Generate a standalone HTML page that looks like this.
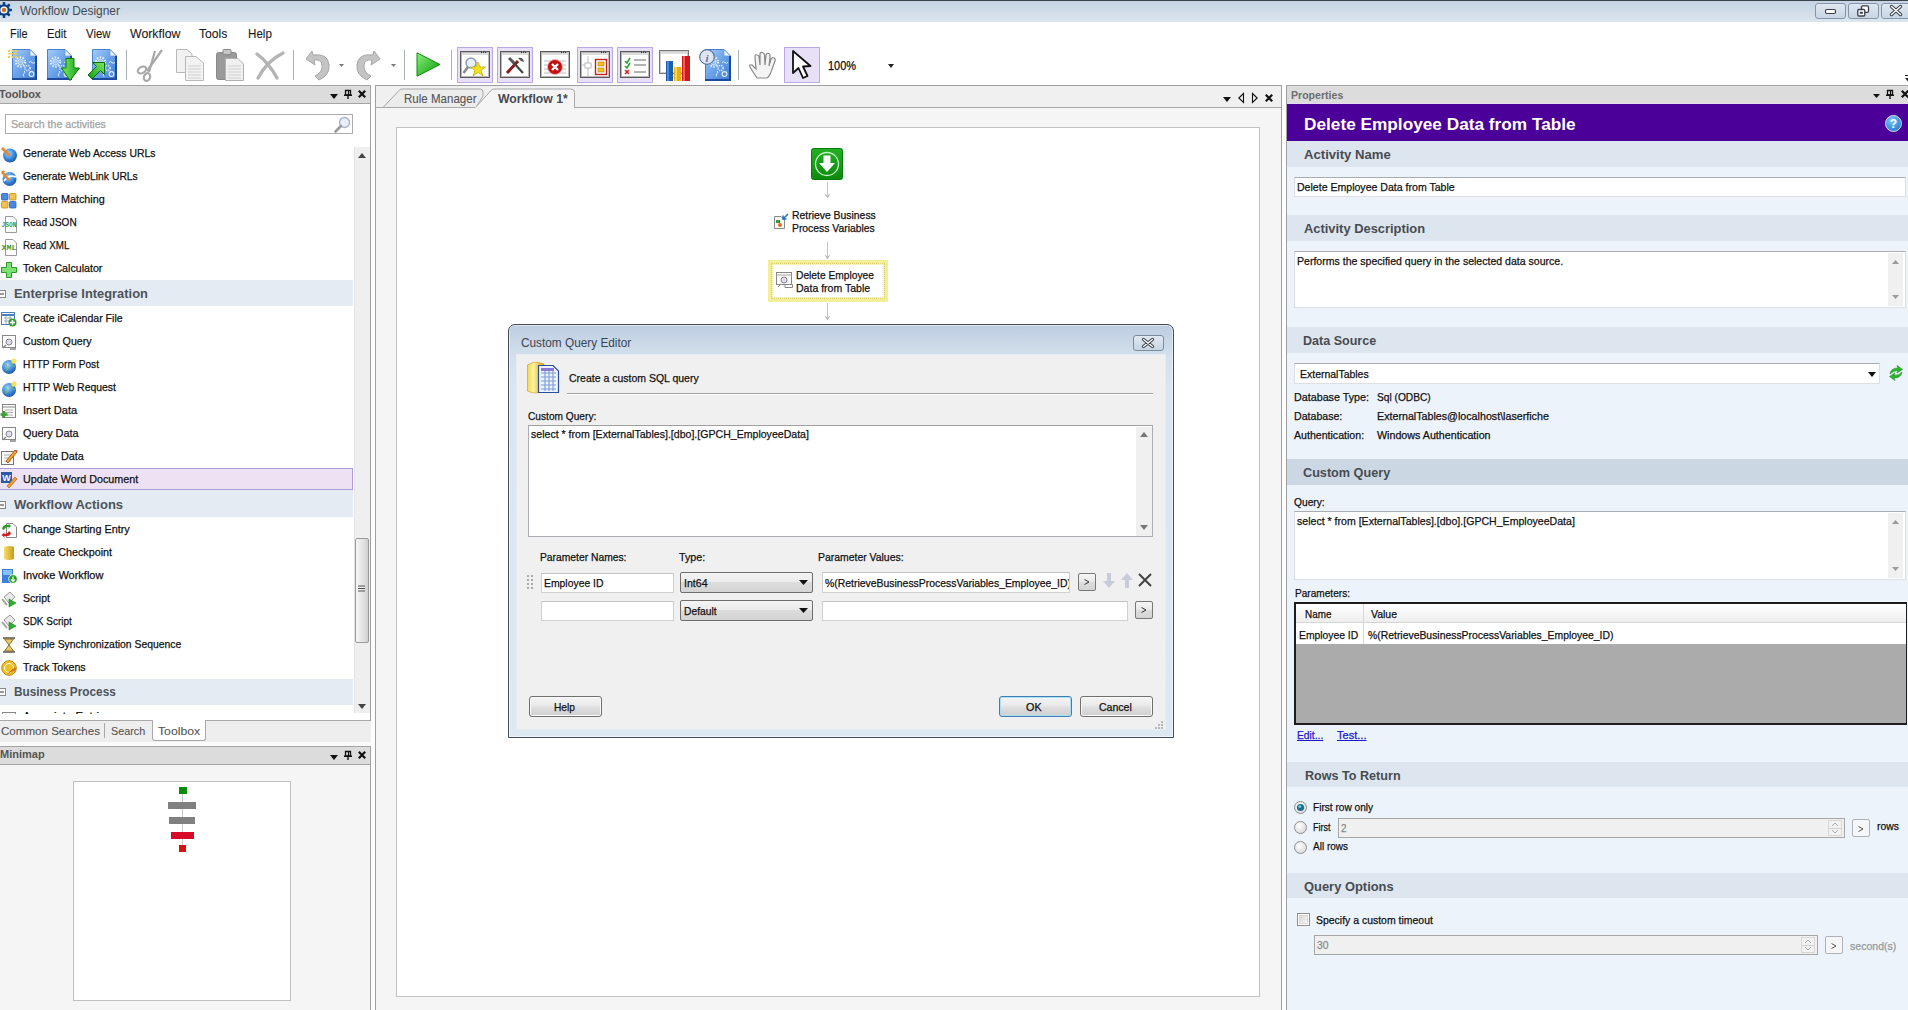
<!DOCTYPE html><html><head><meta charset="utf-8"><title>Workflow Designer</title><style>
html,body{margin:0;padding:0}
body{width:1908px;height:1010px;overflow:hidden;position:relative;background:#f5f5f5;font-family:"Liberation Sans",sans-serif}
.a{position:absolute;box-sizing:border-box}
.t{position:absolute;white-space:nowrap;-webkit-text-stroke:0.25px currentColor}
svg.a{overflow:visible}
</style></head><body>

<div class="a" style="left:0px;top:0px;width:1908px;height:22px;background:linear-gradient(#c6d4e4,#cfdbe8 45%,#dce5ef);border-top:1px solid #3a424c"></div>
<svg class="a" style="left:-4px;top:1px" width="17" height="18" viewBox="0 0 17 18"><g transform="translate(8,9)"><g fill="#0f4284"><rect x="-1.3" y="-8" width="2.6" height="4" rx="0.6" transform="rotate(0)"/><rect x="-1.3" y="-8" width="2.6" height="4" rx="0.6" transform="rotate(45)"/><rect x="-1.3" y="-8" width="2.6" height="4" rx="0.6" transform="rotate(90)"/><rect x="-1.3" y="-8" width="2.6" height="4" rx="0.6" transform="rotate(135)"/><rect x="-1.3" y="-8" width="2.6" height="4" rx="0.6" transform="rotate(180)"/><rect x="-1.3" y="-8" width="2.6" height="4" rx="0.6" transform="rotate(225)"/><rect x="-1.3" y="-8" width="2.6" height="4" rx="0.6" transform="rotate(270)"/><rect x="-1.3" y="-8" width="2.6" height="4" rx="0.6" transform="rotate(315)"/></g><circle r="5.8" fill="#0f4284"/><circle r="3.6" fill="#fff"/><circle r="2.2" fill="#d86a1a"/></g></svg>
<div class="t" style="left:20px;top:5.09px;font-size:12.3px;line-height:12.3px;color:#454a52;font-weight:normal;transform:scaleX(0.971);transform-origin:0 0;-webkit-text-stroke:0;">Workflow Designer</div>
<div class="a" style="left:1815px;top:3px;width:31px;height:16px;border:1px solid #8795a6;border-radius:3px;background:linear-gradient(#dfe8f2,#c7d5e4)"></div>
<div class="a" style="left:1848px;top:3px;width:31px;height:16px;border:1px solid #8795a6;border-radius:3px;background:linear-gradient(#dfe8f2,#c7d5e4)"></div>
<div class="a" style="left:1881px;top:3px;width:30px;height:16px;border:1px solid #8795a6;border-radius:3px;background:linear-gradient(#dfe8f2,#c7d5e4)"></div>
<svg class="a" style="left:1825px;top:9px" width="12" height="6" viewBox="0 0 12 6"><rect x="0.5" y="0.5" width="10" height="4" rx="1.5" fill="#fff" stroke="#3a3f46" stroke-width="1.2"/></svg>
<svg class="a" style="left:1857px;top:5px" width="13" height="12" viewBox="0 0 13 12"><rect x="4.5" y="0.8" width="7" height="6.5" rx="1" fill="#fff" stroke="#3a3f46" stroke-width="1.3"/><rect x="0.8" y="4.5" width="7" height="6.5" rx="1" fill="#fff" stroke="#3a3f46" stroke-width="1.3"/><rect x="2.8" y="6.8" width="3" height="2" fill="#3a3f46"/></svg>
<svg class="a" style="left:1890px;top:5px" width="12" height="11" viewBox="0 0 12 11"><path d="M1.5 1.5 L10.5 9.5 M10.5 1.5 L1.5 9.5" stroke="#3a3f46" stroke-width="3.4" stroke-linecap="round"/><path d="M1.5 1.5 L10.5 9.5 M10.5 1.5 L1.5 9.5" stroke="#fff" stroke-width="1.5" stroke-linecap="round"/></svg>
<div class="a" style="left:0px;top:22px;width:1908px;height:63px;background:#fff"></div>
<div class="t" style="left:9.5px;top:28.09px;font-size:12.3px;line-height:12.3px;color:#1a1a1a;font-weight:normal;transform:scaleX(0.888);transform-origin:0 0;-webkit-text-stroke:0.1px currentColor;">File</div>
<div class="t" style="left:46.5px;top:28.09px;font-size:12.3px;line-height:12.3px;color:#1a1a1a;font-weight:normal;transform:scaleX(0.92);transform-origin:0 0;-webkit-text-stroke:0.1px currentColor;">Edit</div>
<div class="t" style="left:85.5px;top:28.09px;font-size:12.3px;line-height:12.3px;color:#1a1a1a;font-weight:normal;transform:scaleX(0.9267);transform-origin:0 0;-webkit-text-stroke:0.1px currentColor;">View</div>
<div class="t" style="left:129.6px;top:28.09px;font-size:12.3px;line-height:12.3px;color:#1a1a1a;font-weight:normal;transform:scaleX(1.001);transform-origin:0 0;-webkit-text-stroke:0.1px currentColor;">Workflow</div>
<div class="t" style="left:199.4px;top:28.09px;font-size:12.3px;line-height:12.3px;color:#1a1a1a;font-weight:normal;transform:scaleX(0.9856);transform-origin:0 0;-webkit-text-stroke:0.1px currentColor;">Tools</div>
<div class="t" style="left:247.8px;top:28.09px;font-size:12.3px;line-height:12.3px;color:#1a1a1a;font-weight:normal;transform:scaleX(0.9448);transform-origin:0 0;-webkit-text-stroke:0.1px currentColor;">Help</div>
<div class="a" style="left:0px;top:85px;width:1908px;height:1px;background:#a7a7a7"></div>
<svg class="a" style="left:12px;top:49px" width="25" height="31" viewBox="0 0 25 31"><defs><linearGradient id="dg12" x1="0" y1="0" x2="1" y2="1"><stop offset="0" stop-color="#a4ccf8"/><stop offset="0.5" stop-color="#6aa2ea"/><stop offset="1" stop-color="#3a78d6"/></linearGradient></defs><path d="M0.5 0.5 H18 L24.5 7 V30.5 H0.5 Z" fill="url(#dg12)" stroke="#4a80d0" stroke-width="1"/><path d="M18 0.5 V7 H24.5 Z" fill="#eef5ff" stroke="#6a98d8" stroke-width="0.8"/><rect x="23" y="7" width="2" height="24" fill="#1e4a9e"/><rect x="0" y="29" width="25" height="2" fill="#1e4a9e"/><g fill="none" stroke="#e6f0ff"><circle cx="8.5" cy="13" r="4.6" stroke-width="2.2" stroke-dasharray="1.5 1.4"/><circle cx="8.5" cy="13" r="2.6" stroke-width="0.9"/><circle cx="8.5" cy="13" r="0.9" stroke-width="0.8"/><circle cx="15.5" cy="19" r="2.6" stroke-width="1.6" stroke-dasharray="1.1 1"/><path d="M17 13.5 q1.5 -1.5 3 0 q1.5 1.5 3 0" stroke-width="1"/><path d="M12 22 q2 1 0 2.5 q-2 1.5 0 3" stroke-width="1"/><circle cx="19.5" cy="25" r="2.4" stroke-width="1.1"/></g></svg>
<svg class="a" style="left:8px;top:50px" width="9" height="8" viewBox="0 0 9 8"><g fill="#f4d040"><rect x="0" y="0" width="2" height="2"/><rect x="3.5" y="0" width="2" height="2"/><rect x="7" y="0" width="2" height="2"/><rect x="0" y="3" width="9" height="1.6" opacity="0.8"/><rect x="0" y="6" width="2" height="2"/><rect x="3.5" y="6" width="2" height="2"/><rect x="7" y="6" width="2" height="2"/></g></svg>
<svg class="a" style="left:47px;top:49px" width="25" height="31" viewBox="0 0 25 31"><defs><linearGradient id="dg47" x1="0" y1="0" x2="1" y2="1"><stop offset="0" stop-color="#a4ccf8"/><stop offset="0.5" stop-color="#6aa2ea"/><stop offset="1" stop-color="#3a78d6"/></linearGradient></defs><path d="M0.5 0.5 H18 L24.5 7 V30.5 H0.5 Z" fill="url(#dg47)" stroke="#4a80d0" stroke-width="1"/><path d="M18 0.5 V7 H24.5 Z" fill="#eef5ff" stroke="#6a98d8" stroke-width="0.8"/><rect x="23" y="7" width="2" height="24" fill="#1e4a9e"/><rect x="0" y="29" width="25" height="2" fill="#1e4a9e"/><g fill="none" stroke="#e6f0ff"><circle cx="8.5" cy="13" r="4.6" stroke-width="2.2" stroke-dasharray="1.5 1.4"/><circle cx="8.5" cy="13" r="2.6" stroke-width="0.9"/><circle cx="8.5" cy="13" r="0.9" stroke-width="0.8"/><circle cx="15.5" cy="19" r="2.6" stroke-width="1.6" stroke-dasharray="1.1 1"/><path d="M17 13.5 q1.5 -1.5 3 0 q1.5 1.5 3 0" stroke-width="1"/><path d="M12 22 q2 1 0 2.5 q-2 1.5 0 3" stroke-width="1"/><circle cx="19.5" cy="25" r="2.4" stroke-width="1.1"/></g></svg>
<svg class="a" style="left:61px;top:58px" width="19" height="23" viewBox="0 0 19 23"><defs><linearGradient id="ga" x1="0" x2="1"><stop offset="0" stop-color="#7ee86a"/><stop offset="1" stop-color="#12a812"/></linearGradient></defs><path d="M5 0.5 H13 V10 H18.5 L9 22.5 L0.5 10 H5 Z" fill="url(#ga)" stroke="#0a7a0a" stroke-width="1"/></svg>
<svg class="a" style="left:92px;top:49px" width="25" height="31" viewBox="0 0 25 31"><defs><linearGradient id="dg92" x1="0" y1="0" x2="1" y2="1"><stop offset="0" stop-color="#a4ccf8"/><stop offset="0.5" stop-color="#6aa2ea"/><stop offset="1" stop-color="#3a78d6"/></linearGradient></defs><path d="M0.5 0.5 H18 L24.5 7 V30.5 H0.5 Z" fill="url(#dg92)" stroke="#4a80d0" stroke-width="1"/><path d="M18 0.5 V7 H24.5 Z" fill="#eef5ff" stroke="#6a98d8" stroke-width="0.8"/><rect x="23" y="7" width="2" height="24" fill="#1e4a9e"/><rect x="0" y="29" width="25" height="2" fill="#1e4a9e"/><g fill="none" stroke="#e6f0ff"><circle cx="8.5" cy="13" r="4.6" stroke-width="2.2" stroke-dasharray="1.5 1.4"/><circle cx="8.5" cy="13" r="2.6" stroke-width="0.9"/><circle cx="8.5" cy="13" r="0.9" stroke-width="0.8"/><circle cx="15.5" cy="19" r="2.6" stroke-width="1.6" stroke-dasharray="1.1 1"/><path d="M17 13.5 q1.5 -1.5 3 0 q1.5 1.5 3 0" stroke-width="1"/><path d="M12 22 q2 1 0 2.5 q-2 1.5 0 3" stroke-width="1"/><circle cx="19.5" cy="25" r="2.4" stroke-width="1.1"/></g></svg>
<svg class="a" style="left:87px;top:61px" width="19" height="19" viewBox="0 0 19 19"><defs><linearGradient id="gb" x1="0" y1="1" x2="1" y2="0"><stop offset="0" stop-color="#0f9a0f"/><stop offset="1" stop-color="#7ee86a"/></linearGradient></defs><path d="M17.5 1.5 V13.5 L13.5 9.5 L5 18 L1 14 L9.5 5.5 L5.5 1.5 Z" fill="url(#gb)" stroke="#0a6e0a" stroke-width="1"/></svg>
<div class="a" style="left:126px;top:50px;width:1px;height:30px;background:#a9b1ba"></div>
<svg class="a" style="left:136px;top:49px" width="28" height="32" viewBox="0 0 28 32"><g fill="none" stroke="#a8a8a8" stroke-width="2.2"><path d="M26 1 L11 22"/><path d="M19 2 L13 23" /><ellipse cx="6" cy="21" rx="4.5" ry="3" transform="rotate(-30 6 21)"/><ellipse cx="11" cy="28" rx="3" ry="4" transform="rotate(20 11 28)"/></g></svg>
<svg class="a" style="left:176px;top:49px" width="29" height="32" viewBox="0 0 29 32"><g stroke="#b8b8b8" stroke-width="1" fill="#f2f2f2"><path d="M0.5 0.5 H11 L16 5 V23.5 H0.5 Z"/><path d="M9.5 7.5 H20 L27.5 14 V31.5 H9.5 Z"/></g><g stroke="#d0d0d0"><path d="M12 17H25M12 20H25M12 23H25M12 26H25M12 29H25"/></g></svg>
<svg class="a" style="left:216px;top:49px" width="29" height="32" viewBox="0 0 29 32"><rect x="0.5" y="3.5" width="20" height="27" rx="2" fill="#9a9a9a" stroke="#888"/><rect x="7" y="0.5" width="8" height="5" rx="1" fill="#c8c8c8" stroke="#888"/><path d="M9.5 9.5 H22 L27.5 15 V31.5 H9.5 Z" fill="#f0f0f0" stroke="#b0b0b0"/><g stroke="#d0d0d0"><path d="M12 17H25M12 20H25M12 23H25M12 26H25M12 29H25"/></g></svg>
<svg class="a" style="left:255px;top:51px" width="30" height="29" viewBox="0 0 30 29"><g fill="none" stroke="#b4b4b4" stroke-width="3.4" stroke-linecap="round"><path d="M2 3 Q14 12 22 27"/><path d="M28 2 Q12 10 3 27"/></g></svg>
<div class="a" style="left:293px;top:50px;width:1px;height:30px;background:#a9b1ba"></div>
<svg class="a" style="left:304px;top:49px" width="27" height="32" viewBox="0 0 27 32"><path d="M2 10 L8 2 L9 6 Q24 4 25 16 Q26 26 15 31 L11 27 Q19 23 18 16 Q17 10 10 11 L11 16 Z" fill="#c4c4c4" stroke="#a6a6a6" stroke-width="1"/></svg>
<svg class="a" style="left:339px;top:64px" width="5" height="3" viewBox="0 0 5 3"><path d="M0 0H5L2.5 3Z" fill="#7a7a7a"/></svg>
<svg class="a" style="left:355px;top:49px" width="27" height="32" viewBox="0 0 27 32"><g transform="translate(27,0) scale(-1,1)"><path d="M2 10 L8 2 L9 6 Q24 4 25 16 Q26 26 15 31 L11 27 Q19 23 18 16 Q17 10 10 11 L11 16 Z" fill="#c4c4c4" stroke="#a6a6a6" stroke-width="1"/></g></svg>
<svg class="a" style="left:391px;top:64px" width="5" height="3" viewBox="0 0 5 3"><path d="M0 0H5L2.5 3Z" fill="#7a7a7a"/></svg>
<div class="a" style="left:404px;top:50px;width:1px;height:30px;background:#a9b1ba"></div>
<svg class="a" style="left:416px;top:52px" width="25" height="25" viewBox="0 0 25 25"><defs><linearGradient id="gp" x1="0" y1="0" x2="1" y2="1"><stop offset="0" stop-color="#8af07a"/><stop offset="1" stop-color="#0a9a0a"/></linearGradient></defs><path d="M1 0.8 L24 12.5 L1 24.2 Z" fill="url(#gp)" stroke="#0d8a0d" stroke-width="1"/></svg>
<div class="a" style="left:451px;top:50px;width:1px;height:30px;background:#a9b1ba"></div>
<div class="a" style="left:457px;top:47px;width:36px;height:36px;background:#e8e0f6;border:1px solid #b9a8e4"></div>
<div class="a" style="left:497px;top:47px;width:36px;height:36px;background:#e8e0f6;border:1px solid #b9a8e4"></div>
<div class="a" style="left:577px;top:47px;width:36px;height:36px;background:#e8e0f6;border:1px solid #b9a8e4"></div>
<div class="a" style="left:617px;top:47px;width:36px;height:36px;background:#e8e0f6;border:1px solid #b9a8e4"></div>
<div class="a" style="left:784px;top:47px;width:36px;height:36px;background:#e8e0f6;border:1px solid #b9a8e4"></div>
<div class="a" style="left:460px;top:51px;width:30px;height:27px;background:linear-gradient(#dcdcdc 0 3px,#fff 3px);border:1px solid #5a5a5a;box-shadow:inset 0 0 0 1px #b8b8b8"></div>
<svg class="a" style="left:481px;top:52px" width="6" height="2" viewBox="0 0 6 2"><rect x="0" y="0" width="1" height="1" fill="#333"/><rect x="2" y="0" width="1" height="1" fill="#333"/><rect x="4" y="0" width="1" height="1" fill="#333"/></svg>
<div class="a" style="left:500px;top:51px;width:30px;height:27px;background:linear-gradient(#dcdcdc 0 3px,#fff 3px);border:1px solid #5a5a5a;box-shadow:inset 0 0 0 1px #b8b8b8"></div>
<svg class="a" style="left:521px;top:52px" width="6" height="2" viewBox="0 0 6 2"><rect x="0" y="0" width="1" height="1" fill="#333"/><rect x="2" y="0" width="1" height="1" fill="#333"/><rect x="4" y="0" width="1" height="1" fill="#333"/></svg>
<div class="a" style="left:540px;top:51px;width:30px;height:27px;background:linear-gradient(#dcdcdc 0 3px,#fff 3px);border:1px solid #5a5a5a;box-shadow:inset 0 0 0 1px #b8b8b8"></div>
<svg class="a" style="left:561px;top:52px" width="6" height="2" viewBox="0 0 6 2"><rect x="0" y="0" width="1" height="1" fill="#333"/><rect x="2" y="0" width="1" height="1" fill="#333"/><rect x="4" y="0" width="1" height="1" fill="#333"/></svg>
<div class="a" style="left:580px;top:51px;width:30px;height:27px;background:linear-gradient(#dcdcdc 0 3px,#fff 3px);border:1px solid #5a5a5a;box-shadow:inset 0 0 0 1px #b8b8b8"></div>
<svg class="a" style="left:601px;top:52px" width="6" height="2" viewBox="0 0 6 2"><rect x="0" y="0" width="1" height="1" fill="#333"/><rect x="2" y="0" width="1" height="1" fill="#333"/><rect x="4" y="0" width="1" height="1" fill="#333"/></svg>
<div class="a" style="left:620px;top:51px;width:30px;height:27px;background:linear-gradient(#dcdcdc 0 3px,#fff 3px);border:1px solid #5a5a5a;box-shadow:inset 0 0 0 1px #b8b8b8"></div>
<svg class="a" style="left:641px;top:52px" width="6" height="2" viewBox="0 0 6 2"><rect x="0" y="0" width="1" height="1" fill="#333"/><rect x="2" y="0" width="1" height="1" fill="#333"/><rect x="4" y="0" width="1" height="1" fill="#333"/></svg>
<svg class="a" style="left:463px;top:56px" width="24" height="20" viewBox="0 0 24 20"><circle cx="8" cy="7" r="5" fill="#e8f0ff" stroke="#8a9ab0" stroke-width="1.5"/><path d="M5 11 L0.5 17" stroke="#8a8a8a" stroke-width="2.5"/><path d="M15 6 L17 11 L22.5 11 L18 14.5 L20 20 L15 16.5 L10 20 L12 14.5 L7.5 11 L13 11 Z" fill="#f5e020" stroke="#c8b000" stroke-width="0.8"/></svg>
<svg class="a" style="left:505px;top:56px" width="20" height="18" viewBox="0 0 20 18"><path d="M2 17 L13 5" stroke="#8a1a1a" stroke-width="3"/><path d="M18 17 L7 5" stroke="#444" stroke-width="2.2"/><path d="M4 2 L9 7" stroke="#555" stroke-width="3"/><path d="M13 2 Q18 1 19 6 L16 5 Z" fill="#555"/></svg>
<svg class="a" style="left:543px;top:58px" width="24" height="18" viewBox="0 0 24 18"><g stroke="#bbb"><path d="M1 3H8M1 7H6M1 11H6M1 15H8M16 3H23M18 7H23M18 11H23M16 15H23"/></g><circle cx="12" cy="9" r="7.5" fill="#c41010" stroke="#f0b0b0" stroke-width="1"/><path d="M9 6 L15 12 M15 6 L9 12" stroke="#fff" stroke-width="2.2"/></svg>
<svg class="a" style="left:582px;top:56px" width="26" height="21" viewBox="0 0 26 21"><g stroke="#bbb" fill="none"><path d="M6 0V20M0 9H10"/><rect x="3" y="7" width="6" height="5" fill="#fff"/></g><rect x="13.5" y="3.5" width="11" height="15" fill="#fff" stroke="#c02020" stroke-width="1.4"/><rect x="16" y="6" width="6" height="4" fill="#f0c020" stroke="#b08000" stroke-width="0.6"/><rect x="16" y="12" width="6" height="4" fill="#f0c020" stroke="#b08000" stroke-width="0.6"/></svg>
<svg class="a" style="left:623px;top:57px" width="24" height="18" viewBox="0 0 24 18"><g stroke="#30a030" stroke-width="1.6" fill="none"><path d="M2 4 L4 6 L7 1"/><path d="M2 9 L4 11 L7 6"/></g><path d="M2 13 L6 17 M6 13 L2 17" stroke="#d02020" stroke-width="1.5"/><g stroke="#666" stroke-width="1.2"><path d="M11 3H23M11 8H23M11 15H23"/></g></svg>
<div class="a" style="left:659px;top:50px;width:30px;height:24px;background:linear-gradient(#dcdcdc 0 3px,#fff 3px);border:1px solid #777;box-shadow:inset 0 0 0 1px #ccc"></div>
<svg class="a" style="left:666px;top:56px" width="25" height="26" viewBox="0 0 25 26"><rect x="0" y="5" width="7" height="20" fill="#1c5fb0"/><rect x="1" y="5" width="2" height="20" fill="#4a8ad8"/><rect x="8" y="11" width="7" height="14" fill="#e8b010"/><rect x="9" y="11" width="2" height="14" fill="#f8d860"/><rect x="16" y="0" width="8" height="25" fill="#d01818"/><rect x="17" y="0" width="2" height="25" fill="#f06060"/></svg>
<svg class="a" style="left:705px;top:49px" width="26" height="32" viewBox="0 0 26 32"><defs><linearGradient id="dg705" x1="0" y1="0" x2="1" y2="1"><stop offset="0" stop-color="#a4ccf8"/><stop offset="0.5" stop-color="#6aa2ea"/><stop offset="1" stop-color="#3a78d6"/></linearGradient></defs><path d="M0.5 0.5 H19 L25.5 7 V31.5 H0.5 Z" fill="url(#dg705)" stroke="#4a80d0" stroke-width="1"/><path d="M19 0.5 V7 H25.5 Z" fill="#eef5ff" stroke="#6a98d8" stroke-width="0.8"/><rect x="24" y="7" width="2" height="25" fill="#1e4a9e"/><rect x="0" y="30" width="26" height="2" fill="#1e4a9e"/><g fill="none" stroke="#e6f0ff"><circle cx="8.5" cy="13" r="4.6" stroke-width="2.2" stroke-dasharray="1.5 1.4"/><circle cx="8.5" cy="13" r="2.6" stroke-width="0.9"/><circle cx="8.5" cy="13" r="0.9" stroke-width="0.8"/><circle cx="15.5" cy="19" r="2.6" stroke-width="1.6" stroke-dasharray="1.1 1"/><path d="M17 13.5 q1.5 -1.5 3 0 q1.5 1.5 3 0" stroke-width="1"/><path d="M12 22 q2 1 0 2.5 q-2 1.5 0 3" stroke-width="1"/><circle cx="19.5" cy="25" r="2.4" stroke-width="1.1"/></g></svg>
<svg class="a" style="left:699px;top:49px" width="16" height="16" viewBox="0 0 16 16"><circle cx="8" cy="8" r="7.3" fill="#dfe6f0" stroke="#5577aa" stroke-width="1.2"/><text x="8" y="12.5" font-size="11" font-style="italic" font-weight="bold" text-anchor="middle" fill="#5577aa" font-family="Liberation Serif">i</text></svg>
<div class="a" style="left:738px;top:50px;width:1px;height:30px;background:#a9b1ba"></div>
<svg class="a" style="left:749px;top:52px" width="28" height="27" viewBox="0 0 28 27"><path d="M8 26 Q4 20 1 15 Q0 12 3 13 L7 17 L6 5 Q6 2 8 3 Q10 3 10 5 L11 13 L11 2 Q11 0 13.5 0.5 Q15.5 1 15.5 3 L16 13 L17 3 Q17.5 1 19.5 1.5 Q21.5 2 21 5 L20 14 L22 7 Q23 5 25 6 Q27 7 26 9 L22 20 Q20 25 18 26 Z" fill="#f4f4f4" stroke="#8a8a8a" stroke-width="1.2"/></svg>
<svg class="a" style="left:791px;top:50px" width="22" height="30" viewBox="0 0 22 30"><path d="M2 1 L2 23 L7.5 18 L12 28 L16.5 26 L12 16.5 L19.5 16 Z" fill="#fff" stroke="#111" stroke-width="1.8" stroke-linejoin="round"/></svg>
<div class="t" style="left:828px;top:60.34px;font-size:12px;line-height:12px;color:#111;font-weight:normal;transform:scaleX(0.9123);transform-origin:0 0;">100%</div>
<svg class="a" style="left:888px;top:64px" width="6" height="4" viewBox="0 0 6 4"><path d="M0 0H6L3 4Z" fill="#222"/></svg>
<svg class="a" style="left:1905px;top:75px" width="6" height="7" viewBox="0 0 6 7"><path d="M0 0.5H6" stroke="#222" stroke-width="1"/><path d="M0 3H6L3 6.5Z" fill="#222"/></svg>
<div class="a" style="left:0px;top:86px;width:371px;height:634px;background:#fff;border-right:1px solid #a0a0a0"></div>
<div class="a" style="left:0px;top:85px;width:371px;height:19px;background:#dcdcdc;border-top:1px solid #a4a4a4;border-bottom:1px solid #a4a4a4"></div>
<div class="a" style="left:370px;top:85px;width:1px;height:19px;background:#a4a4a4"></div>
<div class="t" style="left:-1px;top:88.77px;font-size:11.5px;line-height:11.5px;color:#555;font-weight:bold;transform:scaleX(0.9575);transform-origin:0 0;-webkit-text-stroke:0;">Toolbox</div>
<svg class="a" style="left:330px;top:94px" width="8" height="5" viewBox="0 0 8 5"><path d="M0 0H8L4 5Z" fill="#111"/></svg>
<svg class="a" style="left:344px;top:90px" width="8" height="9" viewBox="0 0 8 9"><path d="M1.5 0.5H6.5V5H1.5Z" fill="none" stroke="#111" stroke-width="1.3"/><path d="M0 5.3H8M4 5V9" stroke="#111" stroke-width="1.4"/><path d="M4.5 1V5" stroke="#111" stroke-width="1.2"/></svg>
<svg class="a" style="left:358px;top:90px" width="8" height="8" viewBox="0 0 8 8"><path d="M0.8 0.8L7.2 7.2M7.2 0.8L0.8 7.2" stroke="#111" stroke-width="2.2"/></svg>
<div class="a" style="left:5px;top:114px;width:348px;height:20px;border:1px solid #acacac;background:#fff"></div>
<div class="t" style="left:11.3px;top:119.19px;font-size:11px;line-height:11px;color:#a2a2a2;font-weight:normal;transform:scaleX(0.9641);transform-origin:0 0;">Search the activities</div>
<svg class="a" style="left:334px;top:116px" width="17" height="17" viewBox="0 0 17 17"><circle cx="10.5" cy="6.5" r="5" fill="#e8eefc" stroke="#a8b4c8" stroke-width="1.4"/><path d="M7 10 L1.5 15.5" stroke="#9a9a9a" stroke-width="2.6" stroke-linecap="round"/></svg>
<div class="a" style="left:354px;top:147px;width:16px;height:566px;background:#efefef;border-left:1px solid #e4e4e4"></div>
<svg class="a" style="left:358px;top:153px" width="8" height="5" viewBox="0 0 8 5"><path d="M0 5L4 0L8 5Z" fill="#444"/></svg>
<svg class="a" style="left:358px;top:704px" width="8" height="5" viewBox="0 0 8 5"><path d="M0 0L4 5L8 0Z" fill="#444"/></svg>
<div class="a" style="left:355px;top:538px;width:14px;height:105px;border:1px solid #9a9a9a;border-radius:2px;background:linear-gradient(90deg,#f6f6f6,#e2e2e2 60%,#cfcfcf)"></div>
<svg class="a" style="left:358px;top:585px" width="7" height="8" viewBox="0 0 7 8"><path d="M0 1H7M0 3.5H7M0 6H7" stroke="#555" stroke-width="1"/></svg>
<div class="a" style="left:0px;top:468px;width:353px;height:22px;background:#ede2f4;border:1px solid #ad9bd8;border-left:none"></div>
<svg class="a" style="left:1px;top:147px" width="16" height="17" viewBox="0 0 16 17"><defs><radialGradient id="gl1_146" cx="0.4" cy="0.35" r="0.75"><stop offset="0" stop-color="#a8d8ff"/><stop offset="0.55" stop-color="#3a86d8"/><stop offset="1" stop-color="#1a4a98"/></radialGradient></defs><circle cx="9" cy="8.5" r="7" fill="url(#gl1_146)"/><path d="M1 1 L8 8" stroke="#e8862a" stroke-width="2.6"/><path d="M5.5 8.5 L9 9 L8.5 5.5Z" fill="#e8862a"/></svg>
<div class="t" style="left:22.5px;top:147.93px;font-size:11.3px;line-height:11.3px;color:#111;font-weight:normal;transform:scaleX(0.9226);transform-origin:0 0;">Generate Web Access URLs</div>
<svg class="a" style="left:1px;top:170px" width="16" height="17" viewBox="0 0 16 17"><defs><radialGradient id="gl1_169" cx="0.4" cy="0.35" r="0.75"><stop offset="0" stop-color="#a8d8ff"/><stop offset="0.55" stop-color="#3a86d8"/><stop offset="1" stop-color="#1a4a98"/></radialGradient></defs><circle cx="8.5" cy="9" r="7" fill="url(#gl1_169)"/><path d="M3 11 Q8 4 15 7" stroke="#fff" stroke-width="1.6" fill="none"/><path d="M1 2 L8 10" stroke="#e8862a" stroke-width="2.6"/><path d="M0.5 0.5 L4.5 1 L1 4.5Z" fill="#e8862a"/></svg>
<div class="t" style="left:22.5px;top:170.93px;font-size:11.3px;line-height:11.3px;color:#111;font-weight:normal;transform:scaleX(0.9154);transform-origin:0 0;">Generate WebLink URLs</div>
<svg class="a" style="left:1px;top:193px" width="16" height="16" viewBox="0 0 16 16"><rect x="0.5" y="0.5" width="6.5" height="6.5" rx="1" fill="#4a88e8" stroke="#2a5ab8" stroke-width="0.8"/><rect x="8.5" y="0.5" width="6.5" height="6.5" rx="1" fill="#f4c050" stroke="#c08a10" stroke-width="0.8"/><rect x="0.5" y="8.5" width="6.5" height="6.5" rx="1" fill="#f4c050" stroke="#c08a10" stroke-width="0.8"/><rect x="8.5" y="8.5" width="6.5" height="6.5" rx="1" fill="#4a88e8" stroke="#2a5ab8" stroke-width="0.8"/></svg>
<div class="t" style="left:22.5px;top:193.93px;font-size:11.3px;line-height:11.3px;color:#111;font-weight:normal;transform:scaleX(0.9576);transform-origin:0 0;">Pattern Matching</div>
<svg class="a" style="left:1px;top:216px" width="16" height="17" viewBox="0 0 16 17"><path d="M4.5 0.5H12L15.5 4V16.5H4.5Z" fill="#fff" stroke="#9a9a9a"/><text x="8" y="11" font-size="6.5" font-weight="bold" text-anchor="middle" fill="#3a9a3a" font-family="Liberation Mono" textLength="15" lengthAdjust="spacingAndGlyphs">JSON</text></svg>
<div class="t" style="left:22.5px;top:216.93px;font-size:11.3px;line-height:11.3px;color:#111;font-weight:normal;transform:scaleX(0.8907);transform-origin:0 0;">Read JSON</div>
<svg class="a" style="left:1px;top:239px" width="16" height="17" viewBox="0 0 16 17"><path d="M4.5 0.5H12L15.5 4V16.5H4.5Z" fill="#fff" stroke="#9a9a9a"/><text x="8" y="11" font-size="7" font-weight="bold" text-anchor="middle" fill="#3a9a3a" font-family="Liberation Mono" textLength="15" lengthAdjust="spacingAndGlyphs">XML</text></svg>
<div class="t" style="left:22.5px;top:239.93px;font-size:11.3px;line-height:11.3px;color:#111;font-weight:normal;transform:scaleX(0.8691);transform-origin:0 0;">Read XML</div>
<svg class="a" style="left:1px;top:262px" width="16" height="16" viewBox="0 0 16 16"><path d="M5.5 0.5H10.5V5.5H15.5V10.5H10.5V15.5H5.5V10.5H0.5V5.5H5.5Z" fill="#7ee070" stroke="#2a9a2a" stroke-linejoin="round"/></svg>
<div class="t" style="left:22.5px;top:262.93px;font-size:11.3px;line-height:11.3px;color:#111;font-weight:normal;transform:scaleX(0.9434);transform-origin:0 0;">Token Calculator</div>
<div class="a" style="left:0px;top:280px;width:353px;height:26px;background:#e4ebf3"></div>
<svg class="a" style="left:0px;top:289.6px" width="6" height="8" viewBox="0 0 6 8"><rect x="-3.5" y="0.5" width="9" height="7" fill="#fff" stroke="#888"/><path d="M-1 4H4" stroke="#333"/></svg>
<div class="t" style="left:13.5px;top:288.17px;font-size:12.2px;line-height:12.2px;color:#4d5359;font-weight:bold;transform:scaleX(1.0571);transform-origin:0 0;-webkit-text-stroke:0;">Enterprise Integration</div>
<svg class="a" style="left:1px;top:311px" width="16" height="16" viewBox="0 0 16 16"><rect x="0.5" y="1.5" width="13" height="12" fill="#fff" stroke="#4a80c0"/><path d="M0.5 4H13.5" stroke="#4a80c0" stroke-width="2"/><g stroke="#9ab"><path d="M3 7H11M3 10H11M5 5V13M9 5V13"/></g><circle cx="11.5" cy="11.5" r="4" fill="#30a030"/><path d="M11.5 9V14M9 11.5H14" stroke="#fff" stroke-width="1.5"/></svg>
<div class="t" style="left:22.5px;top:312.93px;font-size:11.3px;line-height:11.3px;color:#111;font-weight:normal;transform:scaleX(0.9329);transform-origin:0 0;">Create iCalendar File</div>
<svg class="a" style="left:1px;top:334px" width="16" height="16" viewBox="0 0 16 16"><rect x="1.5" y="1.5" width="13" height="12" fill="#fff" stroke="#888"/><circle cx="8" cy="8" r="3" fill="#dde" stroke="#888"/><path d="M2 14 L5 11 M9 15H15" stroke="#888" stroke-width="1.5"/></svg>
<div class="t" style="left:22.5px;top:335.93px;font-size:11.3px;line-height:11.3px;color:#111;font-weight:normal;transform:scaleX(0.9417);transform-origin:0 0;">Custom Query</div>
<svg class="a" style="left:1px;top:358px" width="16" height="17" viewBox="0 0 16 17"><defs><radialGradient id="gl1_357" cx="0.4" cy="0.35" r="0.75"><stop offset="0" stop-color="#a8d8ff"/><stop offset="0.55" stop-color="#3a86d8"/><stop offset="1" stop-color="#1a4a98"/></radialGradient></defs><circle cx="8" cy="9" r="7" fill="url(#gl1_357)"/><path d="M4 6 Q7 9 5 13 M10 4 Q12 8 14 9" stroke="#7ac06a" stroke-width="1.5" fill="none" opacity="0.7"/><circle cx="13" cy="3" r="2.6" fill="#f8e060"/></svg>
<div class="t" style="left:22.5px;top:358.93px;font-size:11.3px;line-height:11.3px;color:#111;font-weight:normal;transform:scaleX(0.8989);transform-origin:0 0;">HTTP Form Post</div>
<svg class="a" style="left:1px;top:381px" width="16" height="17" viewBox="0 0 16 17"><defs><radialGradient id="gl1_380" cx="0.4" cy="0.35" r="0.75"><stop offset="0" stop-color="#a8d8ff"/><stop offset="0.55" stop-color="#3a86d8"/><stop offset="1" stop-color="#1a4a98"/></radialGradient></defs><circle cx="8" cy="9" r="7" fill="url(#gl1_380)"/><path d="M4 6 Q7 9 5 13 M10 4 Q12 8 14 9" stroke="#7ac06a" stroke-width="1.5" fill="none" opacity="0.7"/><circle cx="13" cy="3" r="2.6" fill="#f8e060"/></svg>
<div class="t" style="left:22.5px;top:381.93px;font-size:11.3px;line-height:11.3px;color:#111;font-weight:normal;transform:scaleX(0.9236);transform-origin:0 0;">HTTP Web Request</div>
<svg class="a" style="left:1px;top:403px" width="16" height="16" viewBox="0 0 16 16"><rect x="1.5" y="1.5" width="13" height="13" fill="#fff" stroke="#888"/><path d="M1.5 4H14.5" stroke="#888"/><g stroke="#aaa"><path d="M4 7H12M4 9.5H12M4 12H12"/></g><path d="M3 8V15M-0.5 11.5H6.5" stroke="#3aa030" stroke-width="2.5"/></svg>
<div class="t" style="left:22.5px;top:404.93px;font-size:11.3px;line-height:11.3px;color:#111;font-weight:normal;transform:scaleX(0.9824);transform-origin:0 0;">Insert Data</div>
<svg class="a" style="left:1px;top:426px" width="16" height="16" viewBox="0 0 16 16"><rect x="1.5" y="1.5" width="13" height="12" fill="#fff" stroke="#888"/><circle cx="8" cy="8" r="3" fill="#dde" stroke="#888"/><path d="M2 14 L5 11 M9 15H15" stroke="#888" stroke-width="1.5"/></svg>
<div class="t" style="left:22.5px;top:427.93px;font-size:11.3px;line-height:11.3px;color:#111;font-weight:normal;transform:scaleX(0.9623);transform-origin:0 0;">Query Data</div>
<svg class="a" style="left:1px;top:449px" width="16" height="16" viewBox="0 0 16 16"><rect x="0.5" y="2.5" width="12" height="13" fill="#fff" stroke="#777"/><g stroke="#aaa"><path d="M3 6H10M3 9H10M3 12H10"/></g><path d="M5 12 L14 1 L16 3 L7 14 Z" fill="#f0a030" stroke="#a05010" stroke-width="0.8"/><path d="M14 1 L16 3 L16.5 1.5Z" fill="#d02020"/></svg>
<div class="t" style="left:22.5px;top:450.93px;font-size:11.3px;line-height:11.3px;color:#111;font-weight:normal;transform:scaleX(0.9583);transform-origin:0 0;">Update Data</div>
<svg class="a" style="left:1px;top:472px" width="16" height="16" viewBox="0 0 16 16"><rect x="0" y="0" width="11" height="11" fill="#2a5aa8"/><text x="5.5" y="9" font-size="9" font-weight="bold" text-anchor="middle" fill="#fff" font-family="Liberation Sans">W</text><path d="M6 14 L14 5 L16 7 L8 16 Z" fill="#f0a030" stroke="#a05010" stroke-width="0.6"/></svg>
<div class="t" style="left:22.5px;top:473.93px;font-size:11.3px;line-height:11.3px;color:#111;font-weight:normal;transform:scaleX(0.9528);transform-origin:0 0;">Update Word Document</div>
<div class="a" style="left:0px;top:490px;width:353px;height:27px;background:#e4ebf3"></div>
<svg class="a" style="left:0px;top:500.6px" width="6" height="8" viewBox="0 0 6 8"><rect x="-3.5" y="0.5" width="9" height="7" fill="#fff" stroke="#888"/><path d="M-1 4H4" stroke="#333"/></svg>
<div class="t" style="left:13.5px;top:499.17px;font-size:12.2px;line-height:12.2px;color:#4d5359;font-weight:bold;transform:scaleX(1.0669);transform-origin:0 0;-webkit-text-stroke:0;">Workflow Actions</div>
<svg class="a" style="left:1px;top:522px" width="16" height="16" viewBox="0 0 16 16"><path d="M5.5 1.5H12L15.5 5V15.5H5.5Z" fill="#fff" stroke="#888"/><path d="M1 7 Q2 2 8 3 L7 1 L10 4 L7 7 L8 5 Q4 5 3 8 Z" fill="#2a9a2a"/><path d="M10 11 Q9 15 3 14 L4 16 L0.5 13 L4 10 L3 12 Q7 12 8 9 Z" fill="#d02020"/></svg>
<div class="t" style="left:22.5px;top:523.93px;font-size:11.3px;line-height:11.3px;color:#111;font-weight:normal;transform:scaleX(0.9606);transform-origin:0 0;">Change Starting Entry</div>
<svg class="a" style="left:1px;top:545px" width="16" height="16" viewBox="0 0 16 16"><defs><linearGradient id="cy545" x1="0" x2="1"><stop offset="0" stop-color="#f8e070"/><stop offset="1" stop-color="#c89a10"/></linearGradient></defs><path d="M3 2 Q8 0 13 2 V14 Q8 16 3 14 Z" fill="url(#cy545)"/></svg>
<div class="t" style="left:22.5px;top:546.93px;font-size:11.3px;line-height:11.3px;color:#111;font-weight:normal;transform:scaleX(0.952);transform-origin:0 0;">Create Checkpoint</div>
<svg class="a" style="left:1px;top:568px" width="16" height="16" viewBox="0 0 16 16"><rect x="1" y="1" width="11" height="14" fill="#3a80d8"/><rect x="2" y="2" width="9" height="5" fill="#8ac0f0"/><circle cx="12" cy="11" r="4.3" fill="#20a020" stroke="#fff" stroke-width="0.8"/><path d="M12 8.5V13M10 11.5L12 13.5L14 11.5" stroke="#fff" stroke-width="1.2" fill="none"/></svg>
<div class="t" style="left:22.5px;top:569.93px;font-size:11.3px;line-height:11.3px;color:#111;font-weight:normal;transform:scaleX(0.9723);transform-origin:0 0;">Invoke Workflow</div>
<svg class="a" style="left:1px;top:591px" width="16" height="16" viewBox="0 0 16 16"><path d="M3 6 L9 1 L14 6 L8 12 Z" fill="#e8e8e8" stroke="#999"/><path d="M1 8 L6 14" stroke="#aaa" stroke-width="2"/><path d="M8 8 L15 12 L8 16 Z" fill="#30b030" stroke="#1a801a" stroke-width="0.6"/></svg>
<div class="t" style="left:22.5px;top:592.93px;font-size:11.3px;line-height:11.3px;color:#111;font-weight:normal;transform:scaleX(0.9348);transform-origin:0 0;">Script</div>
<svg class="a" style="left:1px;top:614px" width="16" height="16" viewBox="0 0 16 16"><path d="M3 6 L9 1 L14 6 L8 12 Z" fill="#e8e8e8" stroke="#999"/><path d="M1 8 L6 14" stroke="#aaa" stroke-width="2"/><path d="M8 8 L15 12 L8 16 Z" fill="#30b030" stroke="#1a801a" stroke-width="0.6"/></svg>
<div class="t" style="left:22.5px;top:615.93px;font-size:11.3px;line-height:11.3px;color:#111;font-weight:normal;transform:scaleX(0.8831);transform-origin:0 0;">SDK Script</div>
<svg class="a" style="left:1px;top:637px" width="16" height="16" viewBox="0 0 16 16"><path d="M2 1H14M2 15H14" stroke="#555" stroke-width="1.5"/><path d="M3.5 2 L12.5 2 L8 8 L12.5 14 L3.5 14 L8 8 Z" fill="#e8c860" stroke="#8a7030"/></svg>
<div class="t" style="left:22.5px;top:638.93px;font-size:11.3px;line-height:11.3px;color:#111;font-weight:normal;transform:scaleX(0.9203);transform-origin:0 0;">Simple Synchronization Sequence</div>
<svg class="a" style="left:1px;top:660px" width="16" height="16" viewBox="0 0 16 16"><circle cx="8" cy="8" r="7.3" fill="#f0c020" stroke="#c08a10"/><circle cx="8" cy="8" r="4.5" fill="none" stroke="#fff" stroke-width="1"/><path d="M6 14 L14 7 L15 10 Z" fill="#d07020"/></svg>
<div class="t" style="left:22.5px;top:661.93px;font-size:11.3px;line-height:11.3px;color:#111;font-weight:normal;transform:scaleX(0.9419);transform-origin:0 0;">Track Tokens</div>
<div class="a" style="left:0px;top:679px;width:353px;height:26px;background:#e4ebf3"></div>
<svg class="a" style="left:0px;top:688.2px" width="6" height="8" viewBox="0 0 6 8"><rect x="-3.5" y="0.5" width="9" height="7" fill="#fff" stroke="#888"/><path d="M-1 4H4" stroke="#333"/></svg>
<div class="t" style="left:13.5px;top:686.17px;font-size:12.2px;line-height:12.2px;color:#4d5359;font-weight:bold;transform:scaleX(0.9694);transform-origin:0 0;-webkit-text-stroke:0;">Business Process</div>
<div class="a" style="left:0;top:705px;width:353px;height:9px;overflow:hidden">
<svg class="a" style="left:1px;top:6px" width="16" height="16" viewBox="0 0 16 16"><rect x="1.5" y="1.5" width="13" height="12" fill="#fff" stroke="#888"/><circle cx="8" cy="6" r="2.5" fill="none" stroke="#888"/></svg>
<div class="t" style="left:22.5px;top:5.93px;font-size:11.3px;line-height:11.3px;color:#111;font-weight:normal;transform:scaleX(1.008);transform-origin:0 0;">Associate Entries</div>
</div>
<div class="a" style="left:0px;top:720px;width:371px;height:22px;background:#eeeeee;border-top:1px solid #a8a8a8"></div>
<div class="a" style="left:152px;top:720px;width:54px;height:21px;background:#fff;border:1px solid #a8a8a8;border-top:none;border-radius:0 0 3px 3px"></div>
<div class="t" style="left:1px;top:725.77px;font-size:11.5px;line-height:11.5px;color:#555;font-weight:normal;transform:scaleX(1.0058);transform-origin:0 0;-webkit-text-stroke:0.1px currentColor;">Common Searches</div>
<div class="a" style="left:104px;top:723px;width:1px;height:15px;background:#a8a8a8"></div>
<div class="t" style="left:111.3px;top:725.77px;font-size:11.5px;line-height:11.5px;color:#555;font-weight:normal;transform:scaleX(0.9386);transform-origin:0 0;-webkit-text-stroke:0.1px currentColor;">Search</div>
<div class="t" style="left:157.9px;top:725.77px;font-size:11.5px;line-height:11.5px;color:#555;font-weight:normal;transform:scaleX(1.0621);transform-origin:0 0;-webkit-text-stroke:0.1px currentColor;">Toolbox</div>
<div class="a" style="left:0px;top:742px;width:371px;height:4px;background:#fbfbfb"></div>
<div class="a" style="left:0px;top:746px;width:371px;height:264px;background:#f5f5f5;border-right:1px solid #a0a0a0"></div>
<div class="a" style="left:0px;top:746px;width:371px;height:19px;background:#dcdcdc;border-top:1px solid #a4a4a4;border-bottom:1px solid #a4a4a4;border-right:1px solid #a4a4a4"></div>
<div class="t" style="left:0px;top:748.77px;font-size:11.5px;line-height:11.5px;color:#555;font-weight:bold;transform:scaleX(0.9584);transform-origin:0 0;-webkit-text-stroke:0;">Minimap</div>
<svg class="a" style="left:330px;top:755px" width="8" height="5" viewBox="0 0 8 5"><path d="M0 0H8L4 5Z" fill="#111"/></svg>
<svg class="a" style="left:344px;top:751px" width="8" height="9" viewBox="0 0 8 9"><path d="M1.5 0.5H6.5V5H1.5Z" fill="none" stroke="#111" stroke-width="1.3"/><path d="M0 5.3H8M4 5V9" stroke="#111" stroke-width="1.4"/><path d="M4.5 1V5" stroke="#111" stroke-width="1.2"/></svg>
<svg class="a" style="left:358px;top:751px" width="8" height="8" viewBox="0 0 8 8"><path d="M0.8 0.8L7.2 7.2M7.2 0.8L0.8 7.2" stroke="#111" stroke-width="2.2"/></svg>
<div class="a" style="left:73px;top:781px;width:218px;height:220px;background:#fff;border:1px solid #c0c0c0"></div>
<div class="a" style="left:179px;top:787px;width:8px;height:7px;background:#0a8a0a"></div>
<div class="a" style="left:182px;top:794px;width:1px;height:8px;background:#c8c8c8"></div>
<div class="a" style="left:168px;top:802px;width:28px;height:7px;background:#808080"></div>
<div class="a" style="left:182px;top:809px;width:1px;height:8px;background:#c8c8c8"></div>
<div class="a" style="left:169px;top:817px;width:26px;height:7px;background:#808080"></div>
<div class="a" style="left:182px;top:824px;width:1px;height:8px;background:#c8c8c8"></div>
<div class="a" style="left:171px;top:832px;width:23px;height:7px;background:#d80a2a"></div>
<div class="a" style="left:182px;top:839px;width:1px;height:6px;background:#c8c8c8"></div>
<div class="a" style="left:179px;top:845px;width:7px;height:7px;background:#d81010"></div>
<div class="a" style="left:371px;top:85px;width:4px;height:925px;background:#fdfdfd"></div>
<div class="a" style="left:375px;top:85px;width:907px;height:925px;background:#f5f5f5;border:1px solid #a0a0a0;border-bottom:none"></div>
<div class="a" style="left:1282px;top:85px;width:4px;height:925px;background:#fdfdfd"></div>
<div class="a" style="left:376px;top:86px;width:905px;height:21px;background:#f0f0f0"></div>
<div class="a" style="left:376px;top:107px;width:905px;height:1px;background:#a8a8a8"></div>
<svg class="a" style="left:376px;top:86px" width="210" height="23" viewBox="0 0 210 23"><path d="M7 21.5 L24 3.5 Q25 3 27 3 H104 Q107 3 107 6 V10 L100 21.5 Z" fill="#ececec" stroke="#a8a8a8" stroke-width="1"/><path d="M99 22 L116 3.5 Q117 3 119 3 H195 Q198.5 3 198.5 6.5 V22" fill="#f5f5f5" stroke="#a8a8a8" stroke-width="1"/><rect x="99.5" y="21" width="98.5" height="2" fill="#f5f5f5"/></svg>
<div class="t" style="left:404.4px;top:93.17px;font-size:12.2px;line-height:12.2px;color:#555;font-weight:normal;transform:scaleX(0.9474);transform-origin:0 0;-webkit-text-stroke:0.1px currentColor;">Rule Manager</div>
<div class="t" style="left:497.8px;top:93.17px;font-size:12.2px;line-height:12.2px;color:#444c55;font-weight:bold;transform:scaleX(1.0029);transform-origin:0 0;-webkit-text-stroke:0;">Workflow 1*</div>
<svg class="a" style="left:1223px;top:97px" width="8" height="5" viewBox="0 0 8 5"><path d="M0 0H8L4 5Z" fill="#111"/></svg>
<svg class="a" style="left:1238px;top:93px" width="6" height="10" viewBox="0 0 6 10"><path d="M5.5 0.5 L0.8 5 L5.5 9.5 Z" fill="none" stroke="#111" stroke-width="1.1"/></svg>
<svg class="a" style="left:1252px;top:93px" width="6" height="10" viewBox="0 0 6 10"><path d="M0.5 0.5 L5.2 5 L0.5 9.5 Z" fill="none" stroke="#111" stroke-width="1.1"/></svg>
<svg class="a" style="left:1265px;top:94px" width="8" height="8" viewBox="0 0 8 8"><path d="M0.8 0.8L7.2 7.2M7.2 0.8L0.8 7.2" stroke="#111" stroke-width="2.2"/></svg>
<div class="a" style="left:396px;top:127px;width:864px;height:870px;background:#fff;border:1px solid #c2c2c2"></div>
<svg class="a" style="left:811px;top:148px" width="32" height="32" viewBox="0 0 32 32"><defs><linearGradient id="gs" x1="0" y1="0" x2="0" y2="1"><stop offset="0" stop-color="#22b022"/><stop offset="1" stop-color="#0e8a0e"/></linearGradient></defs><rect x="0.5" y="0.5" width="31" height="31" rx="2" fill="url(#gs)" stroke="#0a7a0a"/><circle cx="16" cy="16" r="11.5" fill="none" stroke="#c8f0c8" stroke-width="1.3"/><path d="M12.5 7.5 H19.5 V15 H24 L16 24 L8 15 H12.5 Z" fill="#fff"/></svg>
<div class="a" style="left:827px;top:182px;width:1px;height:13px;background:#c4c4c4"></div>
<svg class="a" style="left:824px;top:193px" width="7" height="6" viewBox="0 0 7 6"><path d="M0.5 0.5 L3.5 5.5 L6.5 0.5 L3.5 2.5Z" fill="#b4b4b4"/></svg>
<div class="a" style="left:827px;top:242px;width:1px;height:14px;background:#c4c4c4"></div>
<svg class="a" style="left:824px;top:254px" width="7" height="6" viewBox="0 0 7 6"><path d="M0.5 0.5 L3.5 5.5 L6.5 0.5 L3.5 2.5Z" fill="#b4b4b4"/></svg>
<div class="a" style="left:827px;top:303px;width:1px;height:14px;background:#c4c4c4"></div>
<svg class="a" style="left:824px;top:315px" width="7" height="6" viewBox="0 0 7 6"><path d="M0.5 0.5 L3.5 5.5 L6.5 0.5 L3.5 2.5Z" fill="#b4b4b4"/></svg>
<svg class="a" style="left:773px;top:213px" width="16" height="16" viewBox="0 0 16 16"><path d="M1.5 3.5H8L11.5 7V15.5H1.5Z" fill="#f8f8f0" stroke="#8a8a8a"/><rect x="3" y="7" width="4" height="3" fill="#3a9a3a"/><circle cx="7" cy="12" r="2" fill="#e07020"/><path d="M15 1 L10 6 M10 2.5 V6 H13.5" stroke="#1a70c0" stroke-width="1.5" fill="none"/></svg>
<div class="t" style="left:792.4px;top:210.02px;font-size:11.2px;line-height:11.2px;color:#111;font-weight:normal;transform:scaleX(0.9295);transform-origin:0 0;">Retrieve Business</div>
<div class="t" style="left:792.4px;top:223.02px;font-size:11.2px;line-height:11.2px;color:#111;font-weight:normal;transform:scaleX(0.9259);transform-origin:0 0;">Process Variables</div>
<div class="a" style="left:768px;top:260px;width:120px;height:42px;background:#fff;border:4px solid #f3ee98;outline:1px dotted #ddd070;outline-offset:-4px;box-shadow:0 0 0 1px #f6f2b8 inset"></div>
<svg class="a" style="left:776px;top:272px" width="17" height="16" viewBox="0 0 17 16"><rect x="0.5" y="0.5" width="15" height="12" fill="#fafafa" stroke="#888"/><path d="M0.5 3H15.5" stroke="#aaa"/><circle cx="8" cy="8" r="3" fill="#dde" stroke="#888"/><path d="M2 15 L5 12 M9 15.5H16.5V12.5H9Z" stroke="#888" fill="#fff" stroke-width="1"/></svg>
<div class="t" style="left:795.8px;top:270.02px;font-size:11.2px;line-height:11.2px;color:#111;font-weight:normal;transform:scaleX(0.9145);transform-origin:0 0;">Delete Employee</div>
<div class="t" style="left:795.8px;top:283.02px;font-size:11.2px;line-height:11.2px;color:#111;font-weight:normal;transform:scaleX(0.941);transform-origin:0 0;">Data from Table</div>
<div class="a" style="left:508px;top:324px;width:666px;height:414px;border:1px solid #434d5a;border-radius:7px 7px 0 0;background:linear-gradient(#bdcde0,#d3dfec 30px,#d9e5f1 60px,#dde8f3);box-shadow:0 0 0 1px rgba(255,255,255,.5) inset"></div>
<div class="t" style="left:520.6px;top:337.00px;font-size:12.4px;line-height:12.4px;color:#3b4654;font-weight:normal;transform:scaleX(0.9527);transform-origin:0 0;-webkit-text-stroke:0;">Custom Query Editor</div>
<div class="a" style="left:1133px;top:335px;width:31px;height:16px;border:1px solid #7d8b9c;border-radius:3px;background:linear-gradient(#e0e8f2,#c8d5e4)"></div>
<svg class="a" style="left:1142px;top:338px" width="12" height="10" viewBox="0 0 12 10"><path d="M1.5 1.5 L10.5 8.5 M10.5 1.5 L1.5 8.5" stroke="#3a3f46" stroke-width="3.3" stroke-linecap="round"/><path d="M1.5 1.5 L10.5 8.5 M10.5 1.5 L1.5 8.5" stroke="#fff" stroke-width="1.4" stroke-linecap="round"/></svg>
<div class="a" style="left:516px;top:354px;width:650px;height:376px;background:#f0f0f0;border:1px solid #e4ecf4"></div>
<svg class="a" style="left:527px;top:361px" width="33" height="33" viewBox="0 0 33 33"><defs><linearGradient id="gc" x1="0" x2="1"><stop offset="0" stop-color="#f0d850"/><stop offset="0.35" stop-color="#fff4a0"/><stop offset="1" stop-color="#d0a010"/></linearGradient></defs><path d="M0.5 4 Q8 -1 17 3 V30 Q8 34 0.5 30 Z" fill="url(#gc)" stroke="#c89a10" stroke-width="0.6"/><path d="M11.5 4.5 H26 L31.5 10 V31.5 H11.5 Z" fill="#eef4ff" stroke="#2a4e9a" stroke-width="1.2"/><rect x="14" y="7" width="13" height="3" fill="#8a7ad8"/><g stroke="#7a9ad8" stroke-width="1.1"><path d="M14 12H29M14 16H29M14 20H29M14 24H29M14 28H29M18 10V30M22 10V30M26 10V30"/></g></svg>
<div class="t" style="left:568.8px;top:372.93px;font-size:11.3px;line-height:11.3px;color:#111;font-weight:normal;transform:scaleX(0.9288);transform-origin:0 0;">Create a custom SQL query</div>
<div class="a" style="left:567px;top:393px;width:586px;height:1px;background:#a0a0a0"></div>
<div class="a" style="left:567px;top:394px;width:586px;height:1px;background:#fff"></div>
<div class="t" style="left:528px;top:410.93px;font-size:11.3px;line-height:11.3px;color:#111;font-weight:normal;transform:scaleX(0.8989);transform-origin:0 0;">Custom Query:</div>
<div class="a" style="left:528px;top:425px;width:625px;height:112px;background:#fff;border:1px solid #abadb3;border-top-color:#a0a0a0"></div>
<div class="t" style="left:531px;top:428.93px;font-size:11.3px;line-height:11.3px;color:#111;font-weight:normal;transform:scaleX(0.9358);transform-origin:0 0;">select * from [ExternalTables].[dbo].[GPCH_EmployeeData]</div>
<div class="a" style="left:1136px;top:427px;width:16px;height:109px;background:#f0f0f0"></div>
<svg class="a" style="left:1140px;top:432px" width="8" height="5" viewBox="0 0 8 5"><path d="M0 5L4 0L8 5Z" fill="#777"/></svg>
<svg class="a" style="left:1140px;top:525px" width="8" height="5" viewBox="0 0 8 5"><path d="M0 0L4 5L8 0Z" fill="#777"/></svg>
<div class="t" style="left:540px;top:551.93px;font-size:11.3px;line-height:11.3px;color:#111;font-weight:normal;transform:scaleX(0.9122);transform-origin:0 0;">Parameter Names:</div>
<div class="t" style="left:679.3px;top:551.93px;font-size:11.3px;line-height:11.3px;color:#111;font-weight:normal;transform:scaleX(0.9516);transform-origin:0 0;">Type:</div>
<div class="t" style="left:818.2px;top:551.93px;font-size:11.3px;line-height:11.3px;color:#111;font-weight:normal;transform:scaleX(0.923);transform-origin:0 0;">Parameter Values:</div>
<svg class="a" style="left:527px;top:575px" width="7" height="14" viewBox="0 0 7 14"><g fill="#aaa"><rect x="0" y="0" width="2" height="2"/><rect x="4" y="0" width="2" height="2"/><rect x="0" y="4" width="2" height="2"/><rect x="4" y="4" width="2" height="2"/><rect x="0" y="8" width="2" height="2"/><rect x="4" y="8" width="2" height="2"/><rect x="0" y="12" width="2" height="2"/><rect x="4" y="12" width="2" height="2"/></g></svg>
<div class="a" style="left:541px;top:573px;width:133px;height:20px;background:#fff;border:1px solid #d0d0d0;border-top-color:#c4c4c4"></div>
<div class="t" style="left:543.8px;top:577.93px;font-size:11.3px;line-height:11.3px;color:#111;font-weight:normal;transform:scaleX(0.9198);transform-origin:0 0;">Employee ID</div>
<div class="a" style="left:680px;top:572px;width:133px;height:21px;border:1px solid #6e6e6e;border-radius:2px;background:linear-gradient(#f4f4f4,#ececec 45%,#dcdcdc 50%,#d4d4d4)"></div>
<div class="t" style="left:684.2px;top:577.93px;font-size:11.3px;line-height:11.3px;color:#111;font-weight:normal;transform:scaleX(0.939);transform-origin:0 0;">Int64</div>
<svg class="a" style="left:799px;top:580px" width="9" height="5" viewBox="0 0 9 5"><path d="M0 0H9L4.5 5Z" fill="#111"/></svg>
<div class="a" style="left:822px;top:572px;width:248px;height:21px;background:#fff;border:1px solid #d0d0d0;border-top-color:#c4c4c4"></div>
<div class="a" style="left:825px;top:574px;width:244px;height:17px;overflow:hidden">
<div class="t" style="left:0px;top:3.93px;font-size:11.3px;line-height:11.3px;color:#111;font-weight:normal;transform:scaleX(0.9224);transform-origin:0 0;">%(RetrieveBusinessProcessVariables_Employee_ID)</div>
</div>
<div class="a" style="left:1078px;top:573px;width:18px;height:18px;border:1px solid #777;border-radius:2px;background:linear-gradient(#f6f6f6,#e8e8e8 50%,#dcdcdc 51%,#d4d4d4)"></div>
<svg class="a" style="left:1084px;top:579px" width="6" height="6" viewBox="0 0 6 6"><path d="M0.5 0.5 L5 3 L0.5 5.5" fill="none" stroke="#333" stroke-width="1"/></svg>
<svg class="a" style="left:1102px;top:573px" width="14" height="15" viewBox="0 0 14 15"><path d="M5 0H9V8H13L7 15L1 8H5Z" fill="#c8ccd8"/></svg>
<svg class="a" style="left:1120px;top:573px" width="14" height="15" viewBox="0 0 14 15"><path d="M5 15H9V7H13L7 0L1 7H5Z" fill="#c8ccd8"/></svg>
<svg class="a" style="left:1138px;top:573px" width="14" height="14" viewBox="0 0 14 14"><path d="M1 1L13 13M13 1L1 13" stroke="#444" stroke-width="2"/></svg>
<div class="a" style="left:541px;top:601px;width:133px;height:20px;background:#fff;border:1px solid #d0d0d0;border-top-color:#c4c4c4"></div>
<div class="a" style="left:680px;top:600px;width:133px;height:21px;border:1px solid #6e6e6e;border-radius:2px;background:linear-gradient(#f4f4f4,#ececec 45%,#dcdcdc 50%,#d4d4d4)"></div>
<div class="t" style="left:684.2px;top:605.93px;font-size:11.3px;line-height:11.3px;color:#111;font-weight:normal;transform:scaleX(0.9133);transform-origin:0 0;">Default</div>
<svg class="a" style="left:799px;top:608px" width="9" height="5" viewBox="0 0 9 5"><path d="M0 0H9L4.5 5Z" fill="#111"/></svg>
<div class="a" style="left:822px;top:601px;width:306px;height:20px;background:#fff;border:1px solid #d0d0d0;border-top-color:#c4c4c4"></div>
<div class="a" style="left:1135px;top:601px;width:18px;height:18px;border:1px solid #777;border-radius:2px;background:linear-gradient(#f6f6f6,#e8e8e8 50%,#dcdcdc 51%,#d4d4d4)"></div>
<svg class="a" style="left:1141px;top:607px" width="6" height="6" viewBox="0 0 6 6"><path d="M0.5 0.5 L5 3 L0.5 5.5" fill="none" stroke="#333" stroke-width="1"/></svg>
<div class="a" style="left:529px;top:696px;width:73px;height:21px;border:1px solid #707070;border-radius:3px;background:linear-gradient(#f4f4f4,#ebebeb 40%,#dcdcdc 60%,#d0d0d0);box-shadow:inset 0 0 0 1px #fafafa;"></div>
<div class="t" style="left:554.2px;top:701.93px;font-size:11.3px;line-height:11.3px;color:#111;font-weight:normal;transform:scaleX(0.9037);transform-origin:0 0;">Help</div>
<div class="a" style="left:999px;top:696px;width:73px;height:21px;border:1px solid #3c7fb1;border-radius:3px;background:linear-gradient(#f4f4f4,#ebebeb 40%,#dcdcdc 60%,#d0d0d0);box-shadow:inset 0 0 0 1px #a8e0f8;"></div>
<div class="t" style="left:1026.4px;top:701.93px;font-size:11.3px;line-height:11.3px;color:#111;font-weight:normal;transform:scaleX(0.9555);transform-origin:0 0;">OK</div>
<div class="a" style="left:1080px;top:696px;width:73px;height:21px;border:1px solid #707070;border-radius:3px;background:linear-gradient(#f4f4f4,#ebebeb 40%,#dcdcdc 60%,#d0d0d0);box-shadow:inset 0 0 0 1px #fafafa;"></div>
<div class="t" style="left:1098.7px;top:701.93px;font-size:11.3px;line-height:11.3px;color:#111;font-weight:normal;transform:scaleX(0.9325);transform-origin:0 0;">Cancel</div>
<svg class="a" style="left:1155px;top:721px" width="8" height="8" viewBox="0 0 8 8"><g fill="#b8b8b8"><rect x="6" y="0" width="2" height="2"/><rect x="3" y="3" width="2" height="2"/><rect x="6" y="3" width="2" height="2"/><rect x="0" y="6" width="2" height="2"/><rect x="3" y="6" width="2" height="2"/><rect x="6" y="6" width="2" height="2"/></g></svg>
<div class="a" style="left:1286px;top:85px;width:622px;height:925px;background:#ecf3fb;border-left:1px solid #a0a0a0;border-top:1px solid #a4a4a4"></div>
<div class="a" style="left:1287px;top:86px;width:621px;height:18px;background:#dcdcdc"></div>
<div class="t" style="left:1290.7px;top:88.68px;font-size:11.6px;line-height:11.6px;color:#6e6e6e;font-weight:bold;transform:scaleX(0.9115);transform-origin:0 0;-webkit-text-stroke:0;">Properties</div>
<svg class="a" style="left:1873px;top:94px" width="7" height="4" viewBox="0 0 7 4"><path d="M0 0H7L3.5 4Z" fill="#111"/></svg>
<svg class="a" style="left:1886px;top:90px" width="8" height="9" viewBox="0 0 8 9"><path d="M1.5 0.5H6.5V5H1.5Z" fill="none" stroke="#111" stroke-width="1.3"/><path d="M0 5.3H8M4 5V9" stroke="#111" stroke-width="1.4"/><path d="M4.5 1V5" stroke="#111" stroke-width="1.2"/></svg>
<svg class="a" style="left:1901px;top:90px" width="8" height="8" viewBox="0 0 8 8"><path d="M0.8 0.8L7.2 7.2M7.2 0.8L0.8 7.2" stroke="#111" stroke-width="2.2"/></svg>
<div class="a" style="left:1287px;top:104px;width:621px;height:37px;background:#4b0099"></div>
<div class="a" style="left:1287px;top:103px;width:621px;height:1px;background:#e4dcee"></div>
<div class="t" style="left:1303.6px;top:116.11px;font-size:17px;line-height:17px;color:#fff;font-weight:bold;transform:scaleX(1.0138);transform-origin:0 0;-webkit-text-stroke:0;">Delete Employee Data from Table</div>
<svg class="a" style="left:1885px;top:115px" width="17" height="17" viewBox="0 0 17 17"><defs><radialGradient id="hq" cx="0.4" cy="0.3" r="0.8"><stop offset="0" stop-color="#7cc4f8"/><stop offset="1" stop-color="#1a78c8"/></radialGradient></defs><circle cx="8.5" cy="8.5" r="8" fill="url(#hq)" stroke="#fff" stroke-width="0.8"/><text x="8.5" y="13" font-size="12" font-weight="bold" text-anchor="middle" fill="#fff" font-family="Liberation Sans">?</text></svg>
<div class="a" style="left:1287px;top:141px;width:621px;height:26px;background:#dde5ee"></div>
<div class="t" style="left:1304.1px;top:148.66px;font-size:12.8px;line-height:12.8px;color:#474c52;font-weight:bold;transform:scaleX(1.0253);transform-origin:0 0;-webkit-text-stroke:0;">Activity Name</div>
<div class="a" style="left:1294px;top:177px;width:612px;height:20px;background:#fff;border:1px solid #dcdfe4;border-top-color:#a9acb2"></div>
<div class="t" style="left:1297.4px;top:181.93px;font-size:11.3px;line-height:11.3px;color:#111;font-weight:normal;transform:scaleX(0.9345);transform-origin:0 0;">Delete Employee Data from Table</div>
<div class="a" style="left:1287px;top:215px;width:621px;height:26px;background:#dde5ee"></div>
<div class="t" style="left:1304.1px;top:222.66px;font-size:12.8px;line-height:12.8px;color:#474c52;font-weight:bold;transform:scaleX(1.0074);transform-origin:0 0;-webkit-text-stroke:0;">Activity Description</div>
<div class="a" style="left:1294px;top:251px;width:612px;height:57px;background:#fff;border:1px solid #dcdfe4;border-top-color:#a9acb2"></div>
<div class="t" style="left:1297.4px;top:255.93px;font-size:11.3px;line-height:11.3px;color:#111;font-weight:normal;transform:scaleX(0.9335);transform-origin:0 0;">Performs the specified query in the selected data source.</div>
<div class="a" style="left:1888px;top:253px;width:15px;height:53px;background:#f0f0f0"></div>
<svg class="a" style="left:1892px;top:260px" width="7" height="4" viewBox="0 0 7 4"><path d="M0 4L3.5 0L7 4Z" fill="#9a9a9a"/></svg>
<svg class="a" style="left:1892px;top:295px" width="7" height="4" viewBox="0 0 7 4"><path d="M0 0L3.5 4L7 0Z" fill="#9a9a9a"/></svg>
<div class="a" style="left:1287px;top:327px;width:621px;height:26px;background:#dde5ee"></div>
<div class="t" style="left:1302.8px;top:334.66px;font-size:12.8px;line-height:12.8px;color:#474c52;font-weight:bold;transform:scaleX(0.98);transform-origin:0 0;-webkit-text-stroke:0;">Data Source</div>
<div class="a" style="left:1294px;top:363px;width:586px;height:21px;background:#fff;border:1px solid #dcdfe4;border-top-color:#a9acb2"></div>
<div class="t" style="left:1300.3px;top:368.93px;font-size:11.3px;line-height:11.3px;color:#111;font-weight:normal;transform:scaleX(0.9269);transform-origin:0 0;">ExternalTables</div>
<svg class="a" style="left:1868px;top:372px" width="8" height="5" viewBox="0 0 8 5"><path d="M0 0H8L4 5Z" fill="#111"/></svg>
<svg class="a" style="left:1889px;top:365px" width="14" height="16" viewBox="0 0 14 16"><g fill="#2ab82a" stroke="#168a16" stroke-width="0.6"><path d="M1 9 Q2 3 9 3 L8 0.5 L13.5 4.5 L8 8 L9 5.5 Q4 5.5 1 9Z"/><path d="M13 7 Q12 13 5 13 L6 15.5 L0.5 11.5 L6 8 L5 10.5 Q10 10.5 13 7Z"/></g></svg>
<div class="t" style="left:1294.4px;top:391.93px;font-size:11.3px;line-height:11.3px;color:#111;font-weight:normal;transform:scaleX(0.95);transform-origin:0 0;">Database Type:</div>
<div class="t" style="left:1377.4px;top:391.93px;font-size:11.3px;line-height:11.3px;color:#111;font-weight:normal;transform:scaleX(0.9003);transform-origin:0 0;">Sql (ODBC)</div>
<div class="t" style="left:1294.4px;top:410.93px;font-size:11.3px;line-height:11.3px;color:#111;font-weight:normal;transform:scaleX(0.9377);transform-origin:0 0;">Database:</div>
<div class="t" style="left:1377.4px;top:410.93px;font-size:11.3px;line-height:11.3px;color:#111;font-weight:normal;transform:scaleX(0.9461);transform-origin:0 0;">ExternalTables@localhost\laserfiche</div>
<div class="t" style="left:1294.4px;top:429.93px;font-size:11.3px;line-height:11.3px;color:#111;font-weight:normal;transform:scaleX(0.9377);transform-origin:0 0;">Authentication:</div>
<div class="t" style="left:1377.4px;top:429.93px;font-size:11.3px;line-height:11.3px;color:#111;font-weight:normal;transform:scaleX(0.9469);transform-origin:0 0;">Windows Authentication</div>
<div class="a" style="left:1287px;top:459px;width:621px;height:26px;background:#cbd7e3"></div>
<div class="t" style="left:1302.8px;top:466.66px;font-size:12.8px;line-height:12.8px;color:#474c52;font-weight:bold;transform:scaleX(0.9887);transform-origin:0 0;-webkit-text-stroke:0;">Custom Query</div>
<div class="t" style="left:1293.9px;top:496.93px;font-size:11.3px;line-height:11.3px;color:#111;font-weight:normal;transform:scaleX(0.9053);transform-origin:0 0;">Query:</div>
<div class="a" style="left:1294px;top:511px;width:612px;height:69px;background:#fff;border:1px solid #dcdfe4;border-top-color:#a9acb2"></div>
<div class="t" style="left:1296.9px;top:515.93px;font-size:11.3px;line-height:11.3px;color:#111;font-weight:normal;transform:scaleX(0.9355);transform-origin:0 0;">select * from [ExternalTables].[dbo].[GPCH_EmployeeData]</div>
<div class="a" style="left:1888px;top:513px;width:15px;height:65px;background:#f0f0f0"></div>
<svg class="a" style="left:1892px;top:520px" width="7" height="4" viewBox="0 0 7 4"><path d="M0 4L3.5 0L7 4Z" fill="#9a9a9a"/></svg>
<svg class="a" style="left:1892px;top:567px" width="7" height="4" viewBox="0 0 7 4"><path d="M0 0L3.5 4L7 0Z" fill="#9a9a9a"/></svg>
<div class="t" style="left:1294.5px;top:587.93px;font-size:11.3px;line-height:11.3px;color:#111;font-weight:normal;transform:scaleX(0.8937);transform-origin:0 0;">Parameters:</div>
<div class="a" style="left:1294px;top:602px;width:613px;height:123px;background:#ababab;border:2px solid #1e1e1e;border-right-width:1px"></div>
<div class="a" style="left:1296px;top:604px;width:610px;height:19px;background:linear-gradient(#ffffff,#f7f7f7 50%,#eeeeee);border-bottom:1px solid #d5d5d5"></div>
<div class="a" style="left:1296px;top:623px;width:610px;height:21px;background:#fff"></div>
<div class="a" style="left:1363px;top:604px;width:1px;height:40px;background:#d8d8d8"></div>
<div class="t" style="left:1304.6px;top:608.93px;font-size:11.3px;line-height:11.3px;color:#111;font-weight:normal;transform:scaleX(0.8758);transform-origin:0 0;">Name</div>
<div class="t" style="left:1371.3px;top:608.93px;font-size:11.3px;line-height:11.3px;color:#111;font-weight:normal;transform:scaleX(0.9265);transform-origin:0 0;">Value</div>
<div class="t" style="left:1299.2px;top:629.93px;font-size:11.3px;line-height:11.3px;color:#111;font-weight:normal;transform:scaleX(0.9136);transform-origin:0 0;">Employee ID</div>
<div class="t" style="left:1367.5px;top:629.93px;font-size:11.3px;line-height:11.3px;color:#111;font-weight:normal;transform:scaleX(0.9205);transform-origin:0 0;">%(RetrieveBusinessProcessVariables_Employee_ID)</div>
<div class="t" style="left:1297.4px;top:729.93px;font-size:11.3px;line-height:11.3px;color:#1a1acc;font-weight:normal;transform:scaleX(0.9103);transform-origin:0 0;text-decoration:underline;">Edit...</div>
<div class="t" style="left:1337.3px;top:729.93px;font-size:11.3px;line-height:11.3px;color:#1a1acc;font-weight:normal;transform:scaleX(0.9786);transform-origin:0 0;text-decoration:underline;">Test...</div>
<div class="a" style="left:1287px;top:762px;width:621px;height:25px;background:#dde5ee"></div>
<div class="t" style="left:1304.7px;top:769.66px;font-size:12.8px;line-height:12.8px;color:#474c52;font-weight:bold;transform:scaleX(0.9837);transform-origin:0 0;-webkit-text-stroke:0;">Rows To Return</div>
<svg class="a" style="left:1293.5px;top:800.5px" width="13" height="13" viewBox="0 0 13 13"><defs><radialGradient id="rg807" cx="0.4" cy="0.35" r="0.7"><stop offset="0" stop-color="#fff"/><stop offset="1" stop-color="#d8d8d8"/></radialGradient></defs><circle cx="6.5" cy="6.5" r="6" fill="url(#rg807)" stroke="#8e8f8f" stroke-width="1"/><circle cx="6.5" cy="6.5" r="3.6" fill="#1d6f8e"/><circle cx="5.8" cy="5.6" r="1.4" fill="#7ad0f0"/></svg>
<svg class="a" style="left:1293.5px;top:820.5px" width="13" height="13" viewBox="0 0 13 13"><defs><radialGradient id="rg827" cx="0.4" cy="0.35" r="0.7"><stop offset="0" stop-color="#fff"/><stop offset="1" stop-color="#d8d8d8"/></radialGradient></defs><circle cx="6.5" cy="6.5" r="6" fill="url(#rg827)" stroke="#8e8f8f" stroke-width="1"/></svg>
<svg class="a" style="left:1293.5px;top:840.5px" width="13" height="13" viewBox="0 0 13 13"><defs><radialGradient id="rg847" cx="0.4" cy="0.35" r="0.7"><stop offset="0" stop-color="#fff"/><stop offset="1" stop-color="#d8d8d8"/></radialGradient></defs><circle cx="6.5" cy="6.5" r="6" fill="url(#rg847)" stroke="#8e8f8f" stroke-width="1"/></svg>
<div class="t" style="left:1313.4px;top:801.93px;font-size:11.3px;line-height:11.3px;color:#111;font-weight:normal;transform:scaleX(0.8961);transform-origin:0 0;">First row only</div>
<div class="t" style="left:1313.4px;top:821.93px;font-size:11.3px;line-height:11.3px;color:#111;font-weight:normal;transform:scaleX(0.8013);transform-origin:0 0;">First</div>
<div class="t" style="left:1313.4px;top:840.93px;font-size:11.3px;line-height:11.3px;color:#111;font-weight:normal;transform:scaleX(0.8849);transform-origin:0 0;">All rows</div>
<div class="a" style="left:1338px;top:818px;width:507px;height:20px;background:#f0f0f0;border:1px solid #a6a6a6"></div>
<div class="t" style="left:1341.2px;top:822.93px;font-size:11.3px;line-height:11.3px;color:#8a8a8a;font-weight:normal;transform:scaleX(0.8752);transform-origin:0 0;">2</div>
<div class="a" style="left:1828px;top:820px;width:14px;height:16px;background:#f2f2f2;border:1px solid #d8d8d8"></div>
<div class="a" style="left:1829px;top:828.0px;width:12px;height:1px;background:#d0d0d0"></div>
<svg class="a" style="left:1832px;top:823px" width="6" height="3" viewBox="0 0 6 3"><path d="M0 3L3 0L6 3" fill="none" stroke="#aaa"/></svg>
<svg class="a" style="left:1832px;top:830px" width="6" height="3" viewBox="0 0 6 3"><path d="M0 0L3 3L6 0" fill="none" stroke="#aaa"/></svg>
<div class="a" style="left:1852px;top:819px;width:18px;height:18px;background:#f4f6f8;border:1px solid #aeb2b8;border-radius:2px"></div>
<svg class="a" style="left:1858.0px;top:825.5px" width="6" height="6" viewBox="0 0 6 6"><path d="M0.5 0.5 L5 3 L0.5 5.5" fill="none" stroke="#555" stroke-width="1"/></svg>
<div class="t" style="left:1876.7px;top:820.93px;font-size:11.3px;line-height:11.3px;color:#111;font-weight:normal;transform:scaleX(0.9179);transform-origin:0 0;">rows</div>
<div class="a" style="left:1287px;top:873px;width:621px;height:25px;background:#dde5ee"></div>
<div class="t" style="left:1304.3px;top:880.66px;font-size:12.8px;line-height:12.8px;color:#474c52;font-weight:bold;transform:scaleX(1.009);transform-origin:0 0;-webkit-text-stroke:0;">Query Options</div>
<svg class="a" style="left:1297px;top:913px" width="13" height="13" viewBox="0 0 13 13"><defs><linearGradient id="cbg" x1="0" y1="0" x2="1" y2="1"><stop offset="0" stop-color="#d4d4d4"/><stop offset="1" stop-color="#f8f8f8"/></linearGradient></defs><rect x="0.5" y="0.5" width="12" height="12" fill="#fff" stroke="#8e8f8f"/><rect x="2.5" y="2.5" width="8" height="8" fill="url(#cbg)" stroke="#c8c8c8" stroke-width="0.6"/></svg>
<div class="t" style="left:1316.4px;top:914.93px;font-size:11.3px;line-height:11.3px;color:#111;font-weight:normal;transform:scaleX(0.926);transform-origin:0 0;">Specify a custom timeout</div>
<div class="a" style="left:1314px;top:935px;width:504px;height:20px;background:#f0f0f0;border:1px solid #a6a6a6"></div>
<div class="t" style="left:1317.2px;top:939.93px;font-size:11.3px;line-height:11.3px;color:#8a8a8a;font-weight:normal;transform:scaleX(0.915);transform-origin:0 0;">30</div>
<div class="a" style="left:1801px;top:937px;width:14px;height:16px;background:#f2f2f2;border:1px solid #d8d8d8"></div>
<div class="a" style="left:1802px;top:945.0px;width:12px;height:1px;background:#d0d0d0"></div>
<svg class="a" style="left:1805px;top:940px" width="6" height="3" viewBox="0 0 6 3"><path d="M0 3L3 0L6 3" fill="none" stroke="#aaa"/></svg>
<svg class="a" style="left:1805px;top:947px" width="6" height="3" viewBox="0 0 6 3"><path d="M0 0L3 3L6 0" fill="none" stroke="#aaa"/></svg>
<div class="a" style="left:1825px;top:936px;width:18px;height:18px;background:#f4f6f8;border:1px solid #aeb2b8;border-radius:2px"></div>
<svg class="a" style="left:1831.0px;top:942.5px" width="6" height="6" viewBox="0 0 6 6"><path d="M0.5 0.5 L5 3 L0.5 5.5" fill="none" stroke="#555" stroke-width="1"/></svg>
<div class="t" style="left:1849.8px;top:940.93px;font-size:11.3px;line-height:11.3px;color:#999;font-weight:normal;transform:scaleX(0.9332);transform-origin:0 0;">second(s)</div>
</body></html>
